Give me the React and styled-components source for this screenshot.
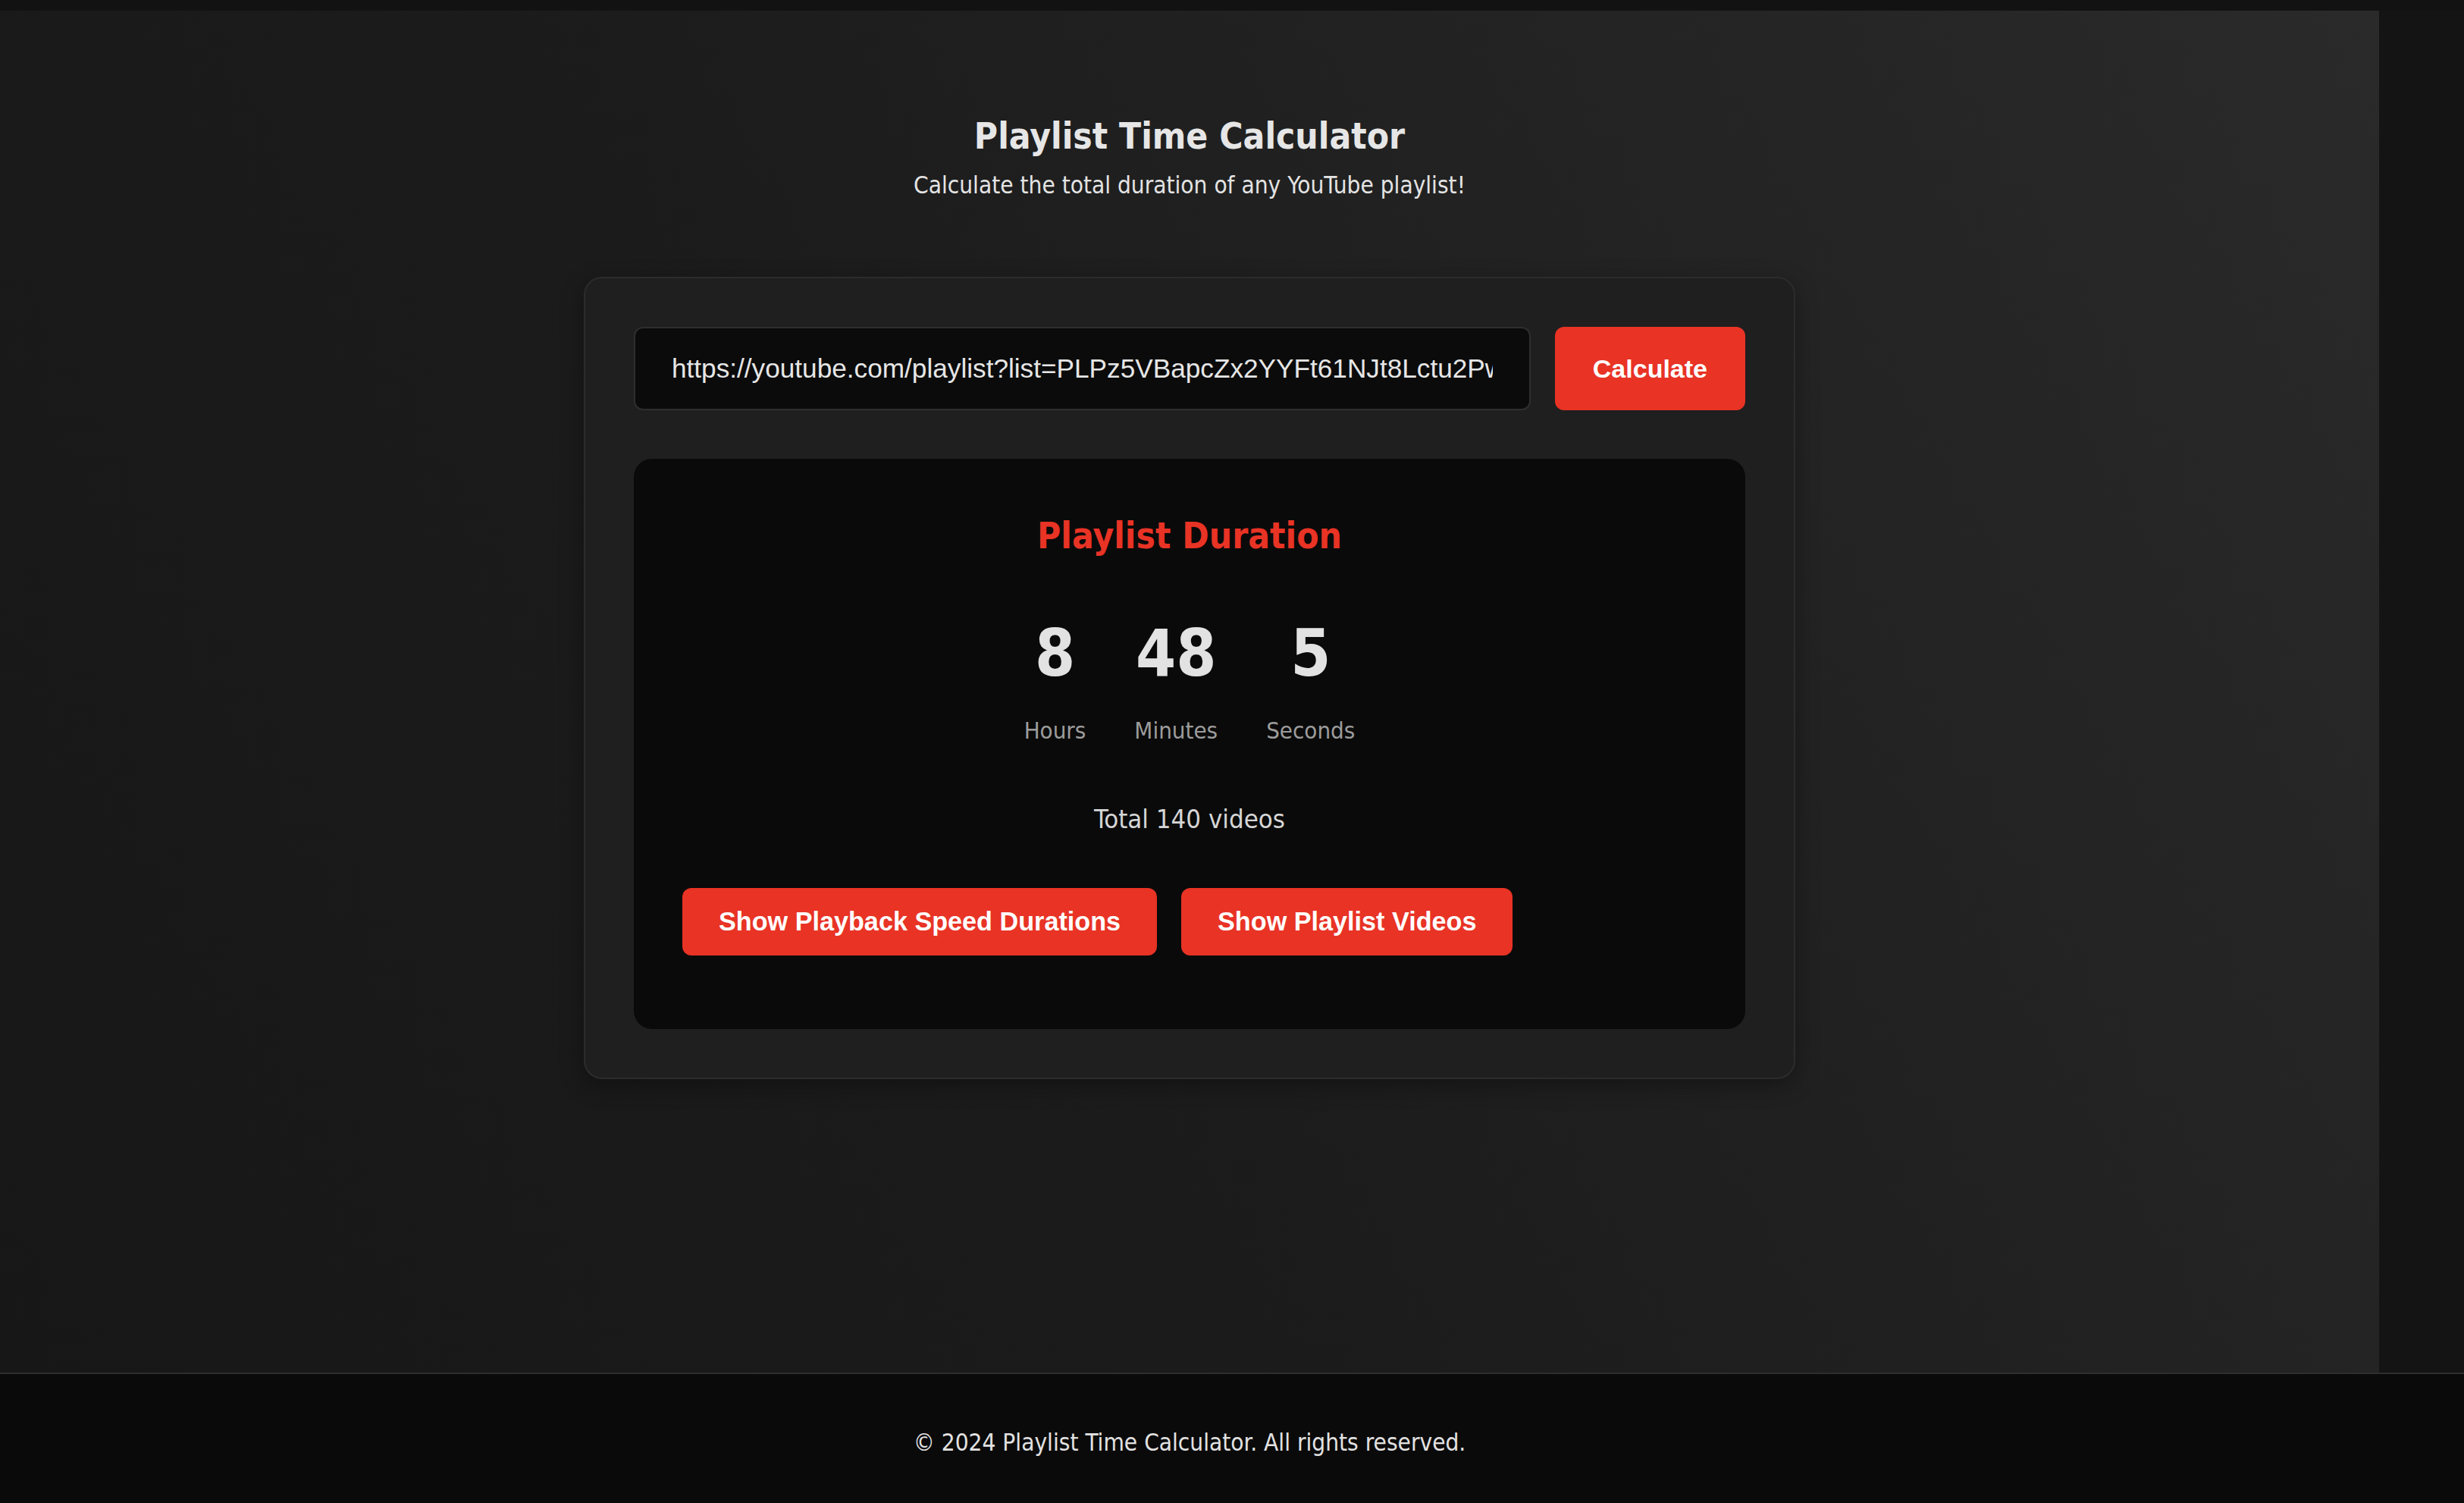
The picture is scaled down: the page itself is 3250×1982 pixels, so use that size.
import styled, { createGlobalStyle } from "styled-components";

const GlobalStyle = createGlobalStyle`
  html, body {
    margin: 0;
    padding: 0;
    background: #121212;
  }
  * {
    box-sizing: border-box;
  }
`;

const Page = styled.div`
  min-height: 100vh;
  display: flex;
  flex-direction: column;
  padding-top: 14px;
  background: #121212;
  font-family: "DejaVu Sans Condensed", "DejaVu Sans", sans-serif;
  font-stretch: condensed;
`;

const Body = styled.div`
  flex: 1;
  display: flex;
`;

const Main = styled.main`
  flex: 1;
  padding-top: 138px;
  background: linear-gradient(60deg, #171717 0%, #1c1c1c 45%, #2a2a2a 100%);
`;

const Strip = styled.div`
  width: 112px;
  background: #141414;
`;

const Header = styled.header`
  text-align: center;
  margin-bottom: 101px;
`;

const Title = styled.h1`
  margin: 0 0 16px;
  font-size: 47.5px;
  line-height: 56px;
  font-weight: 700;
  color: #e6e6e6;
`;

const Subtitle = styled.p`
  margin: 0;
  font-size: 31.3px;
  line-height: 40px;
  color: #e4e4e4;
`;

const Card = styled.section`
  width: 1598px;
  margin: 0 auto;
  padding: 64px;
  background: #1f1f1f;
  border: 2px solid #2c2c2c;
  border-radius: 24px;
  box-shadow: 0 8px 30px rgba(0, 0, 0, 0.35);
`;

const Form = styled.form`
  display: flex;
  gap: 32px;
  margin-bottom: 64px;
`;

const Input = styled.input`
  flex: 1;
  min-width: 0;
  height: 110px;
  padding: 0 48px;
  background: #0b0b0b;
  border: 2px solid #2e2e2e;
  border-radius: 12px;
  color: #e6e6e6;
  font-family: "Liberation Sans", Arial, sans-serif;
  font-size: 35.2px;
  outline: none;
`;

const RedButton = styled.button`
  border: none;
  border-radius: 12px;
  background: #e83325;
  color: #ffffff;
  font-family: "Liberation Sans", Arial, sans-serif;
  font-weight: 700;
  cursor: pointer;
  white-space: nowrap;
  font-size: ${(p) => (p.$big ? "34px" : "34.2px")};
  height: ${(p) => (p.$big ? "110px" : "89px")};
  padding: 0 ${(p) => (p.$big ? "50px" : "48px")};
`;

const Result = styled.div`
  padding: 74px 64px 97px;
  background: #0a0a0a;
  border-radius: 24px;
  text-align: center;
`;

const ResultTitle = styled.h2`
  margin: 0 0 84px;
  font-size: 47.5px;
  line-height: 56px;
  font-weight: 700;
  color: #e83325;
`;

const Units = styled.div`
  display: flex;
  justify-content: center;
  gap: 64px;
`;

const Unit = styled.div`
  display: flex;
  flex-direction: column;
  align-items: center;
`;

const Value = styled.span`
  font-size: 85px;
  line-height: 85px;
  font-weight: 700;
  color: #e2e2e2;
`;

const Label = styled.span`
  margin-top: 39px;
  font-size: 31px;
  line-height: 40px;
  color: #9c9c9c;
`;

const Total = styled.p`
  margin: 76px 0 69px;
  font-size: 34.5px;
  line-height: 43px;
  color: #d6d6d6;
`;

const Actions = styled.div`
  display: flex;
  gap: 32px;
`;

const Footer = styled.footer`
  height: 172px;
  display: flex;
  align-items: center;
  justify-content: center;
  padding: 10px 112px 0 0;
  background: #0a0a0a;
  border-top: 2px solid #2e2e2e;
  color: #e2e2e2;
  font-size: 31.3px;
`;

const units = [
  { value: 8, label: "Hours" },
  { value: 48, label: "Minutes" },
  { value: 5, label: "Seconds" },
];

const App = () => {
  return (
    <Page>
      <GlobalStyle />
      <Body>
        <Main>
          <Header>
            <Title>Playlist Time Calculator</Title>
            <Subtitle>Calculate the total duration of any YouTube playlist!</Subtitle>
          </Header>
          <Card>
            <Form onSubmit={(e) => e.preventDefault()}>
              <Input
                defaultValue="https://youtube.com/playlist?list=PLPz5VBapcZx2YYFt61NJt8Lctu2PwR4aM"
                placeholder="Enter playlist URL"
              />
              <RedButton $big type="submit">
                Calculate
              </RedButton>
            </Form>
            <Result>
              <ResultTitle>Playlist Duration</ResultTitle>
              <Units>
                {units.map((u) => (
                  <Unit key={u.label}>
                    <Value>{u.value}</Value>
                    <Label>{u.label}</Label>
                  </Unit>
                ))}
              </Units>
              <Total>Total 140 videos</Total>
              <Actions>
                <RedButton type="button">Show Playback Speed Durations</RedButton>
                <RedButton type="button">Show Playlist Videos</RedButton>
              </Actions>
            </Result>
          </Card>
        </Main>
        <Strip />
      </Body>
      <Footer>© 2024 Playlist Time Calculator. All rights reserved.</Footer>
    </Page>
  );
};

export default App;
